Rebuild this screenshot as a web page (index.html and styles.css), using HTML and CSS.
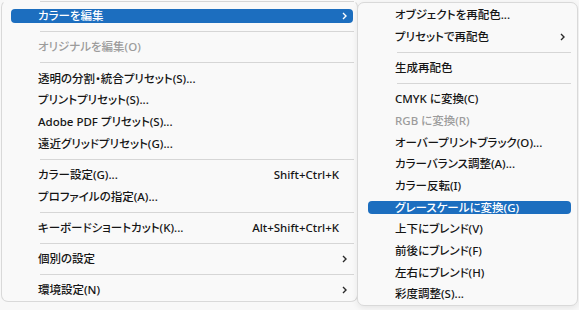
FILE: index.html
```html
<!DOCTYPE html>
<html lang="ja">
<head>
  <meta charset="UTF-8">
  <title>カラーを編集</title>
  <link rel="stylesheet" href="styles.css">
</head>
<body>
  <div class="screen">
    <div class="menu main">
      <div class="sep first"></div>
      <div class="item active"><div class="body"><span>カラーを編集</span><svg class="chev" viewBox="0 0 5 8"><path d="M1 1 L4 4 L1 7"/></svg></div></div>
      <div class="sep"></div>
      <div class="item off"><div class="body"><span>オリジナルを編集(O)</span></div></div>
      <div class="sep"></div>
      <div class="item"><div class="body"><span>透明の分割・統合プリセット(S)...</span></div></div>
      <div class="item"><div class="body"><span>プリントプリセット(S)...</span></div></div>
      <div class="item"><div class="body"><span>Adobe PDF プリセット(S)...</span></div></div>
      <div class="item"><div class="body"><span>遠近グリッドプリセット(G)...</span></div></div>
      <div class="sep"></div>
      <div class="item"><div class="body"><span>カラー設定(G)...</span><span class="key">Shift+Ctrl+K</span></div></div>
      <div class="item"><div class="body"><span>プロファイルの指定(A)...</span></div></div>
      <div class="sep"></div>
      <div class="item"><div class="body"><span>キーボードショートカット(K)...</span><span class="key">Alt+Shift+Ctrl+K</span></div></div>
      <div class="sep"></div>
      <div class="item"><div class="body"><span>個別の設定</span><svg class="chev" viewBox="0 0 5 8"><path d="M1 1 L4 4 L1 7"/></svg></div></div>
      <div class="sep"></div>
      <div class="item"><div class="body"><span>環境設定(N)</span><svg class="chev" viewBox="0 0 5 8"><path d="M1 1 L4 4 L1 7"/></svg></div></div>
    </div>

    <div class="menu sub">
      <div class="item"><div class="body"><span>オブジェクトを再配色...</span></div></div>
      <div class="item"><div class="body"><span>プリセットで再配色</span><svg class="chev" viewBox="0 0 5 8"><path d="M1 1 L4 4 L1 7"/></svg></div></div>
      <div class="sep"></div>
      <div class="item"><div class="body"><span>生成再配色</span></div></div>
      <div class="sep"></div>
      <div class="item"><div class="body"><span>CMYK に変換(C)</span></div></div>
      <div class="item off"><div class="body"><span>RGB に変換(R)</span></div></div>
      <div class="item"><div class="body"><span>オーバープリントブラック(O)...</span></div></div>
      <div class="item"><div class="body"><span>カラーバランス調整(A)...</span></div></div>
      <div class="item"><div class="body"><span>カラー反転(I)</span></div></div>
      <div class="item active"><div class="body"><span>グレースケールに変換(G)</span></div></div>
      <div class="item"><div class="body"><span>上下にブレンド(V)</span></div></div>
      <div class="item"><div class="body"><span>前後にブレンド(F)</span></div></div>
      <div class="item"><div class="body"><span>左右にブレンド(H)</span></div></div>
      <div class="item"><div class="body"><span>彩度調整(S)...</span></div></div>
    </div>
  </div>
</body>
</html>
```

FILE: styles.css
```css
body {
  margin: 0;
  background: #f8f8f8;
  font-family: "Noto Sans", "Noto Sans CJK JP", sans-serif;
  font-size: 11.5px;
  font-weight: 500;
  color: #151515;
  overflow: hidden;
}
.screen {
  display: flex;
  align-items: flex-start;
  height: 310px;
}
.menu {
  background: #f9f9f9;
  border: 1px solid #d9d9d9;
  border-radius: 7px;
  box-sizing: border-box;
  font-feature-settings: "palt";
}
.main {
  width: 357px;
  margin-left: 1px;
  border-top-color: #f9f9f9;
  padding-bottom: 0;
  flex-shrink: 0;
}
.sub {
  flex: 1;
  margin-top: 2px;
  margin-right: 1px;
  margin-left: -1px;
  padding-top: 1px;
  height: 304px;
  overflow: hidden;
  box-shadow: 0 2px 6px rgba(0, 0, 0, 0.08);
}
.item {
  height: 21.7px;
  padding: 4px 0;
  box-sizing: border-box;
}
.body {
  height: 13.7px;
  line-height: 13.7px;
  border-radius: 4px;
  display: flex;
  align-items: center;
  justify-content: space-between;
  white-space: nowrap;
}
.main .body {
  margin: 0 4px 0 9px;
  padding: 0 6px 0 27px;
}
.sub .body {
  margin: 0 6px 0 10px;
  padding: 0 6px 0 27px;
}
.key {
  padding-right: 8px;
}
.chev {
  width: 5px;
  height: 8px;
  fill: none;
  stroke: #2a2a2a;
  stroke-width: 1.4;
}
.active .body {
  background: #1c6ebf;
  color: #fff;
}
.active .chev {
  stroke: #fff;
}
.off .body {
  color: #9c9c9c;
}
.sep {
  height: 1px;
  background: #d6d6d6;
  margin: 4.3px 0;
}
.main .sep {
  margin-left: 38px;
  margin-right: 3px;
}
.main .sep.first {
  margin-top: 0;
  margin-bottom: 3px;
}
.sub .sep {
  margin-left: 39px;
  margin-right: 6px;
}
```
